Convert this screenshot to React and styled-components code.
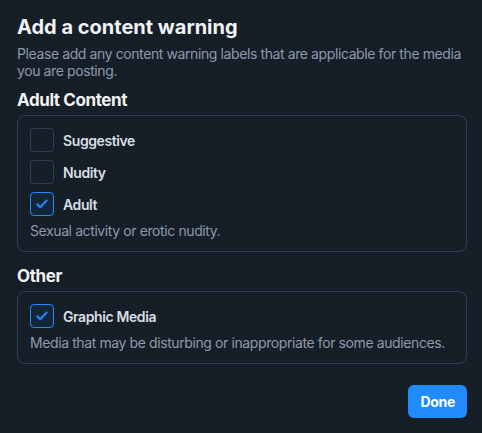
import React, { useState } from "react";
import styled, { createGlobalStyle } from "styled-components";

const Global = createGlobalStyle`
  html, body {
    margin: 0;
    padding: 0;
    background: #161e27;
  }
  body {
    font-family: Inter, "Noto Sans", sans-serif;
    -webkit-font-smoothing: antialiased;
  }
`;

const Dialog = styled.div`
  width: 450px;
  padding: 14px 15px 16px 17px;
  display: flex;
  flex-direction: column;
  color: #f1f3f5;
`;

const Title = styled.h1`
  margin: 0;
  font-size: 20px;
  line-height: 26px;
  font-weight: 700;
  letter-spacing: 0;
`;

const Lead = styled.p`
  margin: 5px 0 0;
  font-size: 14px;
  line-height: 17px;
  letter-spacing: -0.4px;
  color: #8d9aab;
`;

const Heading = styled.h2`
  margin: ${p => p.$top}px 0 0;
  font-size: 17px;
  line-height: 22px;
  font-weight: 700;
  letter-spacing: -0.4px;
`;

const Group = styled.div`
  margin-top: 4px;
  border: 1px solid #2e4052;
  border-radius: 8px;
  padding: 12px 12px 11px;
  display: flex;
  flex-direction: column;
  gap: 8px;
`;

const Row = styled.label`
  display: flex;
  align-items: center;
  gap: 9px;
  cursor: pointer;
  font-size: 14px;
  font-weight: 600;
  letter-spacing: -0.4px;
  color: #d8dee6;
`;

const Box = styled.span`
  width: 24px;
  height: 24px;
  box-sizing: border-box;
  border-radius: 4px;
  border: 1px solid ${p => (p.$on ? "#208bfe" : "#2e4052")};
  background: ${p => (p.$on ? "#142638" : "transparent")};
  display: flex;
  align-items: center;
  justify-content: center;
`;

const Hint = styled.div`
  margin-top: -2px;
  font-size: 14px;
  line-height: 18px;
  letter-spacing: -0.4px;
  color: #8d9aab;
`;

const Footer = styled.div`
  margin-top: 21px;
  display: flex;
  justify-content: flex-end;
`;

const Done = styled.button`
  border: none;
  border-radius: 6px;
  background: #208bfe;
  color: #fff;
  font-family: inherit;
  font-size: 14px;
  font-weight: 700;
  letter-spacing: -0.3px;
  height: 33px;
  padding: 0 12px;
`;

const Check = () => (
  <svg width="14" height="14" viewBox="0 0 24 24" fill="none">
    <path d="M4 12.5l5 5L20 6" stroke="#208bfe" strokeWidth="3.6" strokeLinecap="round" strokeLinejoin="round" />
  </svg>
);

const Option = ({ label, on, onToggle }) => (
  <Row onClick={onToggle}>
    <Box $on={on}>{on && <Check />}</Box>
    {label}
  </Row>
);

export default function App() {
  const [sel, setSel] = useState({ Adult: true, "Graphic Media": true });
  const toggle = k => setSel(s => ({ ...s, [k]: !s[k] }));
  return (
    <>
      <Global />
      <Dialog>
        <Title>Add a content warning</Title>
        <Lead>Please add any content warning labels that are applicable for the media you are posting.</Lead>
        <Heading $top={10}>Adult Content</Heading>
        <Group>
          {["Suggestive", "Nudity", "Adult"].map(k => (
            <Option key={k} label={k} on={!!sel[k]} onToggle={() => toggle(k)} />
          ))}
          <Hint>Sexual activity or erotic nudity.</Hint>
        </Group>
        <Heading $top={13}>Other</Heading>
        <Group>
          <Option label="Graphic Media" on={!!sel["Graphic Media"]} onToggle={() => toggle("Graphic Media")} />
          <Hint>Media that may be disturbing or inappropriate for some audiences.</Hint>
        </Group>
        <Footer>
          <Done>Done</Done>
        </Footer>
      </Dialog>
    </>
  );
}
